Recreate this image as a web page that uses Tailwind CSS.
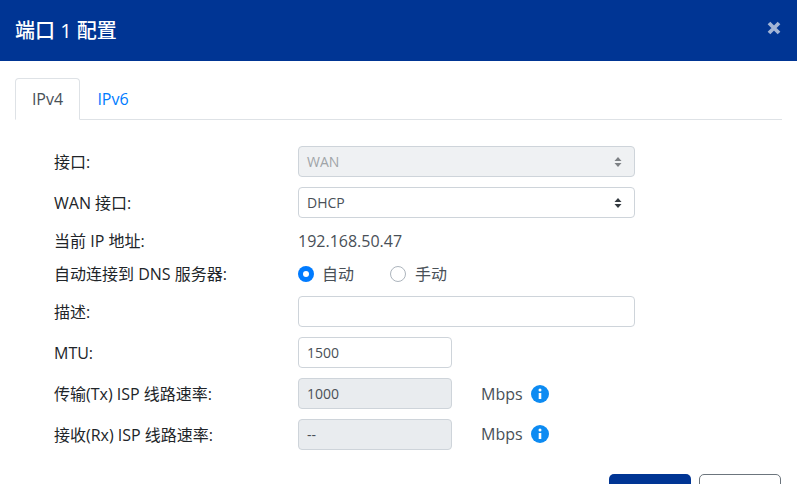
<!DOCTYPE html>
<html lang="zh">
<head>
<meta charset="utf-8">
<script src="https://cdn.jsdelivr.net/npm/@tailwindcss/browser@4"></script>
</head>
<body class="bg-white overflow-hidden">
<div class="w-[797px] h-[484px] overflow-hidden font-['Open_Sans','Noto_Sans_CJK_SC',sans-serif] text-[16px] leading-[24px] text-[#495057]">
  <header class="h-[61px] bg-[#003594] flex items-center justify-between pl-[15px] pr-[15px]">
    <h1 class="text-[20px] leading-[30px] font-medium text-white">端口 1 配置</h1>
    <svg class="w-[16px] h-[16px] -mt-[5px]" viewBox="0 0 16 16" aria-hidden="true"><path d="M3 3l10 10M13 3L3 13" stroke="#a3b5d6" stroke-width="3.800" fill="none"/></svg>
  </header>
  <main class="px-[15px] pt-[17px]">
    <nav class="flex h-[42px] border-b border-[#dee2e6]">
      <span class="w-[65px] h-[42px] flex items-center justify-center border border-b-white border-[#dee2e6] rounded-t-[4px] text-[#495057]">IPv4</span>
      <span class="w-[66px] h-[42px] flex items-center justify-center text-[#007bff]">IPv6</span>
    </nav>
    <form class="pl-[39px] pt-[26px] flex flex-col text-[#212529]">
      <div class="flex items-center h-[31px] mb-[10px]">
        <label class="w-[244px]">接口:</label>
        <div class="w-[337px] h-[31px] border border-[#ced4da] rounded-[4px] bg-[#eff1f3] pl-[8px] pr-[12px] flex items-center justify-between text-[14px] text-[#a0a4a8]">WAN
          <svg class="w-[8px] h-[12px]" viewBox="0 0 8 12"><path d="M4 1l3.500 4h-7zM4 11L.5 7h7z" fill="#7d8185"/></svg>
        </div>
      </div>
      <div class="flex items-center h-[31px] mb-[7px]">
        <label class="w-[244px]">WAN 接口:</label>
        <div class="w-[337px] h-[31px] border border-[#ced4da] rounded-[4px] bg-white pl-[8px] pr-[12px] flex items-center justify-between text-[14px] text-[#495057]">DHCP
          <svg class="w-[8px] h-[12px]" viewBox="0 0 8 12"><path d="M4 1l3.500 4h-7zM4 11L.5 7h7z" fill="#343a40"/></svg>
        </div>
      </div>
      <div class="flex items-center h-[31px] mb-[4px]">
        <label class="w-[244px]">当前 IP 地址:</label>
        <span class="text-[#495057]">192.168.50.47</span>
      </div>
      <div class="flex items-center h-[24px] mb-[10px] mt-[2px]">
        <label class="w-[244px]">自动连接到 DNS 服务器:</label>
        <span class="w-[16px] h-[16px] rounded-full bg-[#007bff] flex items-center justify-center"><span class="w-[6px] h-[6px] rounded-full bg-white"></span></span>
        <span class="ml-[8px] text-[#495057]">自动</span>
        <span class="ml-[36px] w-[16px] h-[16px] rounded-full border border-[#adb5bd] bg-white"></span>
        <span class="ml-[9px] text-[#495057]">手动</span>
      </div>
      <div class="flex items-center h-[31px] mb-[10px]">
        <label class="w-[244px]">描述:</label>
        <div class="w-[337px] h-[31px] border border-[#ced4da] rounded-[4px] bg-white"></div>
      </div>
      <div class="flex items-center h-[31px] mb-[10px]">
        <label class="w-[244px]">MTU:</label>
        <div class="w-[154px] h-[31px] border border-[#ced4da] rounded-[4px] bg-white pl-[8px] flex items-center text-[14px] text-[#495057]">1500</div>
      </div>
      <div class="flex items-center h-[31px] mb-[10px]">
        <label class="w-[244px]">传输(Tx) ISP 线路速率:</label>
        <div class="w-[154px] h-[31px] border border-[#ced4da] rounded-[4px] bg-[#e9ecef] pl-[8px] flex items-center text-[14px] text-[#495057]">1000</div>
        <span class="ml-[29px] text-[#495057]">Mbps</span>
        <svg class="ml-[8px] w-[18px] h-[18px]" viewBox="0 0 18 18"><circle cx="9" cy="9" r="9" fill="#0d8bf2"/><circle cx="9" cy="5" r="1.500" fill="#fff"/><path d="M7.700 8h2.600v6H7.700z" fill="#fff"/></svg>
      </div>
      <div class="flex items-center h-[31px]">
        <label class="w-[244px]">接收(Rx) ISP 线路速率:</label>
        <div class="w-[154px] h-[31px] border border-[#ced4da] rounded-[4px] bg-[#e9ecef] pl-[8px] flex items-center text-[14px] text-[#495057]">--</div>
        <span class="ml-[29px] -mt-[2px] text-[#495057]">Mbps</span>
        <svg class="ml-[8px] -mt-[2px] w-[18px] h-[18px]" viewBox="0 0 18 18"><circle cx="9" cy="9" r="9" fill="#0d8bf2"/><circle cx="9" cy="5" r="1.500" fill="#fff"/><path d="M7.700 8h2.600v6H7.700z" fill="#fff"/></svg>
      </div>
      <div class="flex justify-end gap-[8px] mt-[24px] pr-[1px]">
        <div class="w-[82px] h-[34px] rounded-[5px] bg-[#003594]"></div>
        <div class="w-[82px] h-[34px] rounded-[5px] border border-[#6c757d] bg-white"></div>
      </div>
    </form>
  </main>
</div>
</body>
</html>
